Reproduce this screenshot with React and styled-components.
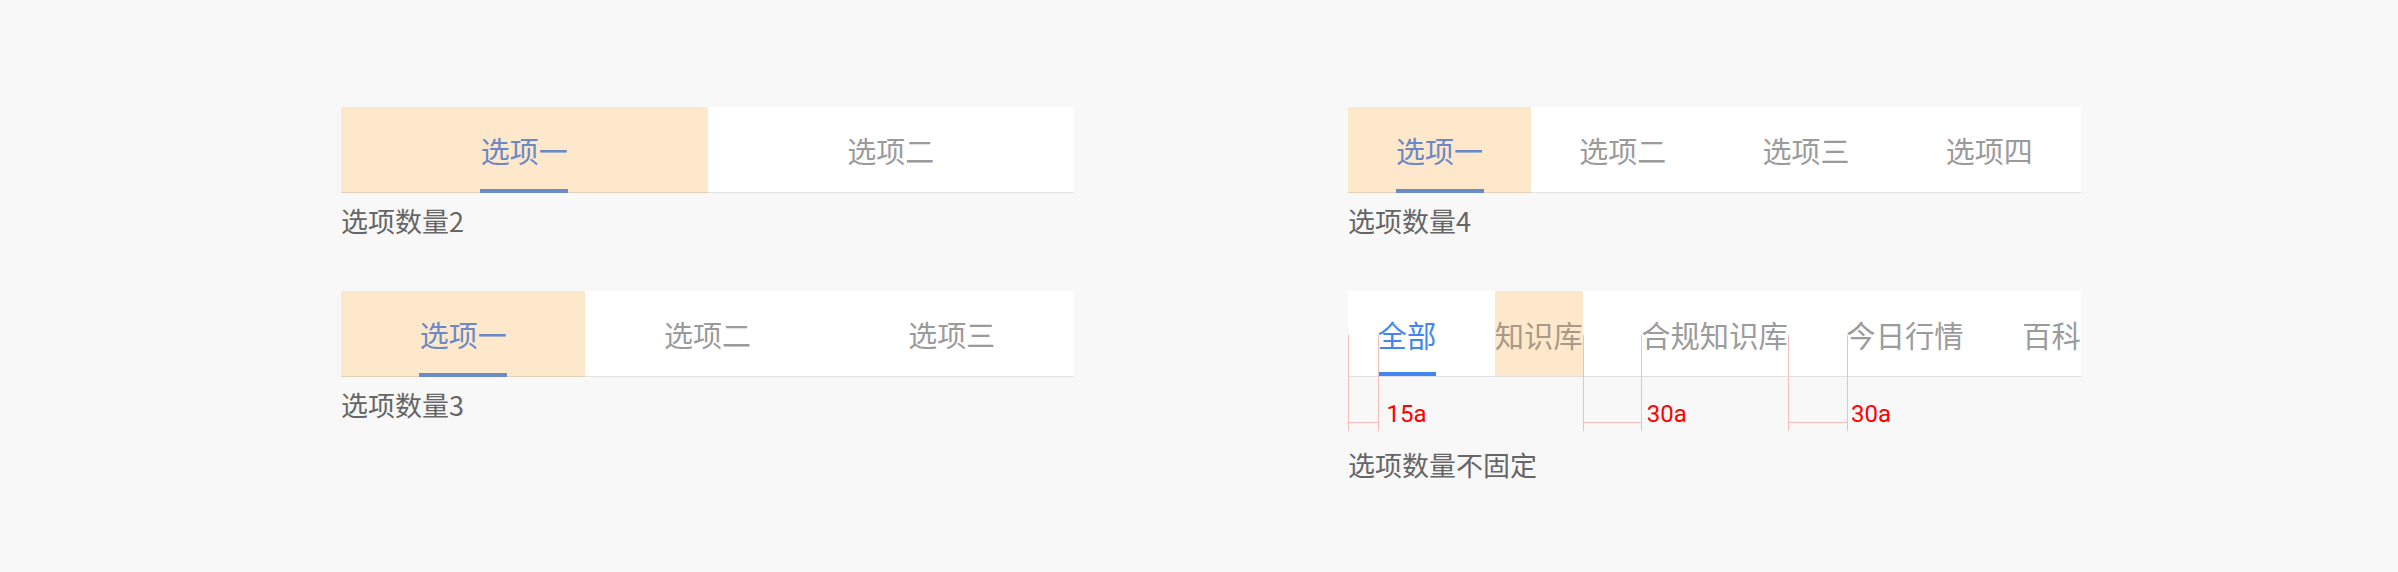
import styled, { createGlobalStyle } from 'styled-components';

const GlobalStyle = createGlobalStyle`
  body {
    margin: 0;
    background: #f8f8f8;
    font-family: "Noto Sans CJK SC", "Noto Sans", sans-serif;
  }
`;

const left = [
  { tabs: ['选项一', '选项二'], label: '选项数量2' },
  { tabs: ['选项一', '选项二', '选项三'], label: '选项数量3' },
];

const scrollTabs = ['全部', '知识库', '合规知识库', '今日行情', '百科'];

// annotation marks, measured from the bar's left edge
const guides = [0, 29.6, 235, 293.4, 440, 498.7];
const spans = [
  { from: 0, to: 29.6, text: '15a', x: 38.5 },
  { from: 235, to: 293.4, text: '30a', x: 298.8 },
  { from: 440, to: 498.7, text: '30a', x: 503 },
];

function FixedTabs({ tabs }) {
  return (
    <Bar>
      {tabs.map((t, i) => (
        <Tab key={t} $active={i === 0}>
          {t}
          {i === 0 && <Indicator />}
        </Tab>
      ))}
    </Bar>
  );
}

export default function App() {
  return (
    <>
      <GlobalStyle />
      <Page>
        <Column>
          {left.map((g) => (
            <Block key={g.label}>
              <FixedTabs tabs={g.tabs} />
              <Label>{g.label}</Label>
            </Block>
          ))}
        </Column>

        <Column>
          <Block>
            <FixedTabs tabs={['选项一', '选项二', '选项三', '选项四']} />
            <Label>选项数量4</Label>
          </Block>

          <Block>
            <Annotated>
              <ScrollBar>
                {scrollTabs.map((t, i) => (
                  <ScrollTab key={t} $active={i === 0} $marked={i === 1}>
                    {t}
                    {i === 0 && <ScrollIndicator />}
                  </ScrollTab>
                ))}
              </ScrollBar>
              {guides.map((x) => (
                <Guide key={x} style={{ left: x }} />
              ))}
              {spans.map((s) => (
                <Span key={s.from} style={{ left: s.from, width: s.to - s.from }} />
              ))}
              {spans.map((s) => (
                <Measure key={'m' + s.from} style={{ left: s.x }}>{s.text}</Measure>
              ))}
            </Annotated>
            <Label $far>选项数量不固定</Label>
          </Block>
        </Column>
      </Page>
    </>
  );
}

const Page = styled.div`
  display: grid;
  grid-template-columns: 733px 733px;
  column-gap: 274px;
  padding: 107px 0 0 341px;
  min-height: 572px;
  box-sizing: border-box;
`;

const Column = styled.div`
  display: flex;
  flex-direction: column;
  gap: 52px;
`;

const Block = styled.div`
  display: flex;
  flex-direction: column;
`;

const Bar = styled.div`
  display: flex;
  height: 86px;
  background: #fff;
`;

const Tab = styled.div`
  position: relative;
  flex: 1;
  display: flex;
  align-items: center;
  justify-content: center;
  font-size: 29px;
  color: ${(p) => (p.$active ? '#6a89c6' : '#9b9b9b')};
  background: ${(p) => (p.$active ? '#fee8cb' : 'transparent')};
  border-bottom: 1px solid rgba(0, 0, 0, 0.1);
`;

const Indicator = styled.span`
  position: absolute;
  bottom: -1px;
  left: 50%;
  width: 88px;
  height: 4px;
  margin-left: -44px;
  background: #6b8bc8;
`;

const Label = styled.div`
  margin-top: ${(p) => (p.$far ? '70px' : '10px')};
  font-size: 27px;
  line-height: 36px;
  color: #666;
`;

const Annotated = styled.div`
  position: relative;
`;

const ScrollBar = styled.div`
  display: flex;
  gap: 58.6px;
  height: 86px;
  padding-left: 29.6px;
  background: #fff;
  border-bottom: 1px solid rgba(0, 0, 0, 0.12);
  box-sizing: border-box;
  overflow: hidden;
  white-space: nowrap;
`;

const ScrollTab = styled.div`
  position: relative;
  flex: none;
  display: flex;
  align-items: center;
  font-size: 29.3px;
  color: ${(p) => (p.$active ? '#4285f0' : p.$marked ? '#a89a88' : '#9b9b9b')};
  background: ${(p) => (p.$marked ? '#fee8cb' : 'transparent')};
`;

const ScrollIndicator = styled.span`
  position: absolute;
  left: 0;
  right: 0;
  bottom: 0;
  height: 4px;
  background: #4286f1;
`;

const Guide = styled.span`
  position: absolute;
  top: 44px;
  width: 1px;
  height: 96px;
  background: #f6bcbc;
`;

const Span = styled.span`
  position: absolute;
  top: 131px;
  height: 1px;
  background: #f6bcbc;
`;

const Measure = styled.span`
  position: absolute;
  top: 111px;
  font-family: Roboto, "Liberation Sans", sans-serif;
  font-size: 24px;
  line-height: 1;
  color: #ff0000;
`;
